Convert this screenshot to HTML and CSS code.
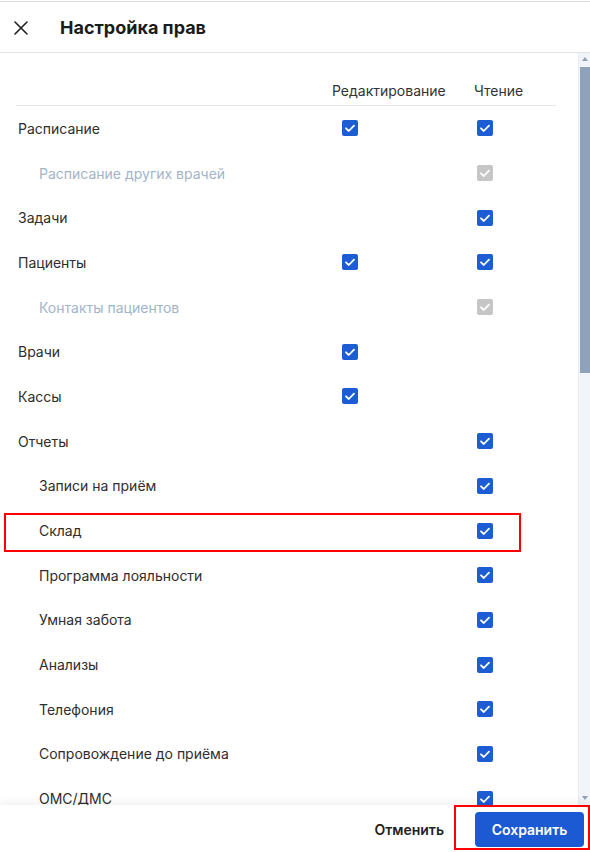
FILE: index.html
```html
<!DOCTYPE html>
<html lang="ru">
<head>
<meta charset="utf-8">
<title>Настройка прав</title>
<link rel="stylesheet" href="styles.css">
</head>
<body>
<div class="modal">
  <header class="modal-header">
    <button class="close-btn" aria-label="Закрыть">
      <svg width="14" height="14" viewBox="0 0 14 14"><path d="M1 1 L13 13 M13 1 L1 13" stroke="#222" stroke-width="1.6" fill="none" stroke-linecap="round"/></svg>
    </button>
    <h1 class="modal-title">Настройка прав</h1>
  </header>

  <div class="modal-body">
    <div class="scroll-content">
      <div class="perm-table">
        <div class="perm-row perm-head">
          <span></span><span class="col-title">Редактирование</span><span class="col-title">Чтение</span>
        </div>

        <div class="perm-row">
          <span class="label">Расписание</span>
          <span class="cell edit"><span class="cb"><svg viewBox="0 0 16 16"><path d="M4 8.3 L6.8 11 L12 5.6"/></svg></span></span>
          <span class="cell read"><span class="cb"><svg viewBox="0 0 16 16"><path d="M4 8.3 L6.8 11 L12 5.6"/></svg></span></span>
        </div>
        <div class="perm-row sub disabled">
          <span class="label">Расписание других врачей</span>
          <span class="cell edit"></span>
          <span class="cell read"><span class="cb off"><svg viewBox="0 0 16 16"><path d="M4 8.3 L6.8 11 L12 5.6"/></svg></span></span>
        </div>
        <div class="perm-row">
          <span class="label">Задачи</span>
          <span class="cell edit"></span>
          <span class="cell read"><span class="cb"><svg viewBox="0 0 16 16"><path d="M4 8.3 L6.8 11 L12 5.6"/></svg></span></span>
        </div>
        <div class="perm-row">
          <span class="label">Пациенты</span>
          <span class="cell edit"><span class="cb"><svg viewBox="0 0 16 16"><path d="M4 8.3 L6.8 11 L12 5.6"/></svg></span></span>
          <span class="cell read"><span class="cb"><svg viewBox="0 0 16 16"><path d="M4 8.3 L6.8 11 L12 5.6"/></svg></span></span>
        </div>
        <div class="perm-row sub disabled">
          <span class="label">Контакты пациентов</span>
          <span class="cell edit"></span>
          <span class="cell read"><span class="cb off"><svg viewBox="0 0 16 16"><path d="M4 8.3 L6.8 11 L12 5.6"/></svg></span></span>
        </div>
        <div class="perm-row">
          <span class="label">Врачи</span>
          <span class="cell edit"><span class="cb"><svg viewBox="0 0 16 16"><path d="M4 8.3 L6.8 11 L12 5.6"/></svg></span></span>
          <span class="cell read"></span>
        </div>
        <div class="perm-row">
          <span class="label">Кассы</span>
          <span class="cell edit"><span class="cb"><svg viewBox="0 0 16 16"><path d="M4 8.3 L6.8 11 L12 5.6"/></svg></span></span>
          <span class="cell read"></span>
        </div>
        <div class="perm-row">
          <span class="label">Отчеты</span>
          <span class="cell edit"></span>
          <span class="cell read"><span class="cb"><svg viewBox="0 0 16 16"><path d="M4 8.3 L6.8 11 L12 5.6"/></svg></span></span>
        </div>
        <div class="perm-row sub">
          <span class="label">Записи на приём</span>
          <span class="cell edit"></span>
          <span class="cell read"><span class="cb"><svg viewBox="0 0 16 16"><path d="M4 8.3 L6.8 11 L12 5.6"/></svg></span></span>
        </div>
        <div class="perm-row sub highlighted">
          <span class="label">Склад</span>
          <span class="cell edit"></span>
          <span class="cell read"><span class="cb"><svg viewBox="0 0 16 16"><path d="M4 8.3 L6.8 11 L12 5.6"/></svg></span></span>
        </div>
        <div class="perm-row sub">
          <span class="label">Программа лояльности</span>
          <span class="cell edit"></span>
          <span class="cell read"><span class="cb"><svg viewBox="0 0 16 16"><path d="M4 8.3 L6.8 11 L12 5.6"/></svg></span></span>
        </div>
        <div class="perm-row sub">
          <span class="label">Умная забота</span>
          <span class="cell edit"></span>
          <span class="cell read"><span class="cb"><svg viewBox="0 0 16 16"><path d="M4 8.3 L6.8 11 L12 5.6"/></svg></span></span>
        </div>
        <div class="perm-row sub">
          <span class="label">Анализы</span>
          <span class="cell edit"></span>
          <span class="cell read"><span class="cb"><svg viewBox="0 0 16 16"><path d="M4 8.3 L6.8 11 L12 5.6"/></svg></span></span>
        </div>
        <div class="perm-row sub">
          <span class="label">Телефония</span>
          <span class="cell edit"></span>
          <span class="cell read"><span class="cb"><svg viewBox="0 0 16 16"><path d="M4 8.3 L6.8 11 L12 5.6"/></svg></span></span>
        </div>
        <div class="perm-row sub">
          <span class="label">Сопровождение до приёма</span>
          <span class="cell edit"></span>
          <span class="cell read"><span class="cb"><svg viewBox="0 0 16 16"><path d="M4 8.3 L6.8 11 L12 5.6"/></svg></span></span>
        </div>
        <div class="perm-row sub">
          <span class="label">ОМС/ДМС</span>
          <span class="cell edit"></span>
          <span class="cell read"><span class="cb"><svg viewBox="0 0 16 16"><path d="M4 8.3 L6.8 11 L12 5.6"/></svg></span></span>
        </div>
      </div>
    </div>

    <div class="scrollbar">
      <span class="sb-arrow up"></span>
      <div class="sb-track"><div class="sb-thumb"></div></div>
      <span class="sb-arrow down"></span>
    </div>
  </div>

  <footer class="modal-footer">
    <button class="btn-cancel">Отменить</button>
    <button class="btn-save">Сохранить</button>
  </footer>
</div>
</body>
</html>
```

FILE: styles.css
```css
* { box-sizing: border-box; }

html, body {
  margin: 0;
  padding: 0;
  background: #fff;
}

body {
  font-family: Inter, "Noto Sans", "Liberation Sans", sans-serif;
  color: #2e2e2e;
  font-size: 14px;
}

.modal {
  width: 590px;
  height: 851px;
  display: flex;
  flex-direction: column;
  overflow: hidden;
  margin-top: 1px;
  border-top: 1px solid #dcdcdc;
}

.modal-header {
  height: 51px;
  flex: none;
  display: flex;
  align-items: center;
  border-bottom: 1px solid #e3e3e3;
  padding-left: 13px;
}

.close-btn {
  border: 0;
  background: none;
  padding: 0;
  width: 16px;
  height: 16px;
  display: flex;
  align-items: center;
  justify-content: center;
  margin-right: 31px;
  margin-top: 1px;
}

.modal-title {
  margin: 0;
  font-size: 18px;
  font-weight: 700;
  color: #1b1b1b;
}

.modal-body {
  flex: 1;
  min-height: 0;
  display: flex;
}

.scroll-content {
  flex: 1;
  overflow: hidden;
  padding: 0 22px 0 16px;
}

.perm-row {
  display: grid;
  grid-template-columns: 316px 142px 82px;
  align-items: center;
  height: 44.7px;
  position: relative;
}

.perm-head {
  height: auto;
  padding-top: 28px;
  padding-bottom: 4px;
  line-height: 20px;
  border-bottom: 1px solid #e6e6e6;
}

.col-title {
  color: #333;
  font-size: 14px;
}

.label {
  padding-left: 2px;
  color: #2e2e2e;
}

.perm-row.sub .label {
  padding-left: 23px;
}

.perm-row.disabled .label {
  color: #a2b4ca;
}

.cell {
  display: flex;
  align-items: center;
}

.cell.edit { padding-left: 10px; }
.cell.read { padding-left: 3px; }

.cb {
  width: 16px;
  height: 16px;
  border-radius: 2px;
  background: #1e5cd5;
  display: flex;
  align-items: center;
  justify-content: center;
}

.cb svg {
  width: 16px;
  height: 16px;
}

.cb svg path {
  fill: none;
  stroke: #fff;
  stroke-width: 1.8;
  stroke-linecap: round;
  stroke-linejoin: round;
}

.cb.off {
  background: #c6c6c6;
}

.highlighted::after {
  content: "";
  position: absolute;
  left: -12px;
  width: 513px;
  top: 5px;
  height: 35px;
  border: 2.5px solid #ff0000;
  pointer-events: none;
}

.scrollbar {
  flex: none;
  width: 12px;
  display: flex;
  flex-direction: column;
  align-items: center;
  background: #f1f4f9;
  border-left: 1px solid #e9edf2;
  padding-bottom: 3px;
}

.sb-arrow {
  flex: none;
  width: 0;
  height: 0;
  border-left: 3.5px solid transparent;
  border-right: 3.5px solid transparent;
}

.sb-arrow.up {
  margin-top: 4px;
  border-bottom: 4px solid #8ea2bc;
  margin-bottom: 6px;
}

.sb-arrow.down {
  border-top: 4px solid #8ea2bc;
  margin-top: 4px;
  margin-bottom: 2px;
}

.sb-track {
  flex: 1;
  width: 100%;
  display: flex;
  flex-direction: column;
  align-items: center;
}

.sb-thumb {
  width: 10px;
  height: 306px;
  background: #8ea2bc;
  margin-left: 1px;
}

.modal-footer {
  flex: none;
  height: 47px;
  display: flex;
  align-items: center;
  justify-content: flex-end;
  gap: 15px;
  padding: 2px 6px 0 0;
  background: #fff;
  box-shadow: 0 -3px 8px rgba(0, 0, 0, 0.06);
  position: relative;
  z-index: 1;
}

.btn-cancel {
  border: 0;
  background: none;
  font-family: inherit;
  font-size: 14px;
  font-weight: 600;
  color: #222;
  padding: 0 16px;
  height: 35px;
}

.btn-save {
  position: relative;
  border: 0;
  border-radius: 4px;
  background: #1c5ad3;
  color: #fff;
  font-family: inherit;
  font-size: 14px;
  font-weight: 600;
  height: 35px;
  padding: 0 16px;
  width: 109px;
}

.btn-save::after {
  content: "";
  position: absolute;
  left: -21px;
  top: -7px;
  right: -6px;
  bottom: -3px;
  border: 2.5px solid #ff0000;
  pointer-events: none;
}
```
